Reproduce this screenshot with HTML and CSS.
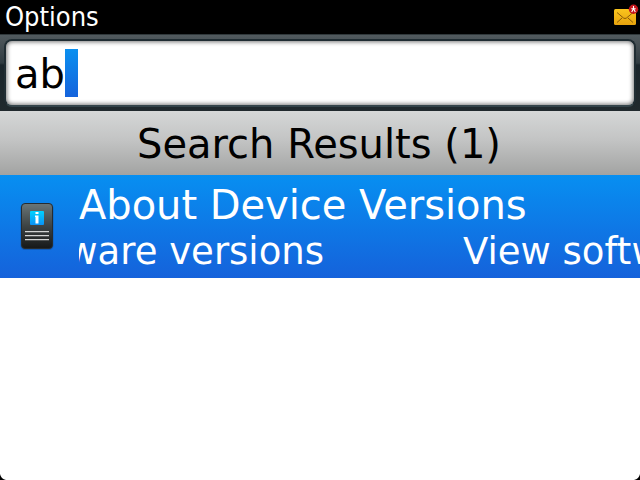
FILE: index.html
```
<!DOCTYPE html>
<html lang="en">
<head>
<meta charset="utf-8">
<title>Options</title>
<link rel="stylesheet" href="styles.css">
</head>
<body>
<div class="screen">
  <header class="titlebar">
    <span class="title">Options</span>
    <svg class="mail" width="26" height="24" viewBox="0 0 26 24">
      <defs>
        <linearGradient id="env" x1="0" y1="0" x2="0" y2="1"><stop offset="0" stop-color="#fac51e"/><stop offset="1" stop-color="#e6a20d"/></linearGradient>
      </defs>
      <rect x="1" y="6" width="22" height="16" rx="1.500" fill="url(#env)"/>
      <path d="M4 9.500l6.500 5.500q1.500 1 3 0L20 9.500M4 19.500l5-4.500M20 19.500l-5-4.500" fill="none" stroke="#8a5a08" stroke-width="1"/>
      <circle cx="20.500" cy="6.200" r="4.700" fill="#c4161c"/>
      <path d="M20.500 3v3.800M18.300 5.800h4.400M20.300 6l-1.600 3M20.700 6l1.600 3" stroke="#fff" stroke-width="1.100" fill="none"/>
    </svg>
  </header>
  <div class="search">
    <div class="field"><span>ab</span><i class="caret"></i></div>
  </div>
  <h1 class="results">Search Results (1)</h1>
  <div class="row">
    <svg class="icon" width="36" height="50" viewBox="0 0 36 50">
      <defs>
        <linearGradient id="dev" x1="0" y1="0" x2="0" y2="1"><stop offset="0" stop-color="#6a7678"/><stop offset=".5" stop-color="#3d4344"/><stop offset="1" stop-color="#161818"/></linearGradient>
        <linearGradient id="info" x1="0" y1="0" x2="0" y2="1"><stop offset="0" stop-color="#00d2ff"/><stop offset="1" stop-color="#0b92f5"/></linearGradient>
      </defs>
      <rect x="1.500" y="2.500" width="33" height="46.500" rx="4.500" fill="#123c78" opacity=".4"/>
      <rect x="2.500" y="2.500" width="31" height="45" rx="3.500" fill="url(#dev)" stroke="#262c30"/>
      <rect x="11" y="10" width="14" height="14" rx="1" fill="url(#info)"/>
      <path d="M16.500 11h3v2h-3zM16 14.500h3.500v8h-3v-6.500h-.5z" fill="#fff"/>
      <path d="M6 30.700h24M6 34.700h24M6 38.700h24" stroke="#d2d4d4" stroke-width="1.300"/>
    </svg>
    <div class="text">
      <div class="name">About Device Versions</div>
      <div class="marquee"><div class="track"><span>View software versions</span><span>View software versions</span></div></div>
    </div>
  </div>
  <svg class="corner left" width="6" height="6" viewBox="0 0 6 6"><path d="M0 0Q1 5 6 6H0z"/></svg>
  <svg class="corner right" width="6" height="6" viewBox="0 0 6 6"><path d="M6 0Q5 5 0 6H6z"/></svg>
</div>
</body>
</html>
```
FILE: styles.css
```
* { box-sizing: border-box; }
body { margin: 0; font-family: "DejaVu Sans", sans-serif; }
.screen { position: relative; width: 640px; height: 480px; overflow: hidden; background: #fff; }
.titlebar {
  display: flex;
  justify-content: space-between;
  height: 34px;
  padding: 0 1px 0 5px;
  background: #000;
  color: #fff;
}
.title { font: 27px/33px "DejaVu Sans Condensed", "DejaVu Sans", sans-serif; font-stretch: condensed; }
.mail { margin-top: 3px; }
.search {
  height: 77px;
  padding: 4px 4px 4px;
  border-top: 1px solid #30383b;
  background: linear-gradient(#515a5e 0, #303b41 28px, #1a252b 30px, #20292d 100%);
}
.field {
  display: flex;
  height: 68px;
  padding: 8px 9px;
  border: 2px solid #202d33;
  border-bottom-color: #34444a;
  border-radius: 8px;
  background: #fff;
  box-shadow: inset 0 0 4px 1px #777;
  font-size: 40px;
  line-height: 50px;
}
.caret { width: 13px; height: 48px; background: linear-gradient(#0a90f0, #1563dc); }
.results {
  height: 64px;
  margin: 0;
  padding: 1px 2px 0 0;
  background: linear-gradient(#d5d7d7, #c3c4c4 45%, #a2a3a2);
  font-size: 40px;
  font-weight: 400;
  line-height: 64px;
  text-align: center;
}
.row {
  display: flex;
  height: 103px;
  padding: 7px 0 0 19px;
  background: linear-gradient(#078ff1, #1562db);
  color: #fff;
}
.icon { flex: none; margin: 19px 24px 0 0; }
.text { flex: 1; min-width: 0; }
.name { font-size: 40px; line-height: 46px; letter-spacing: -.04px; }
.marquee { padding-top: 1px; overflow: hidden; }
.track {
  display: flex;
  gap: 139px;
  width: max-content;
  margin-left: -180px;
  font-size: 37px;
  line-height: 46px;
  white-space: nowrap;
}
.corner { position: absolute; bottom: 0; }
.left { left: 0; }
.right { right: 0; }
```
